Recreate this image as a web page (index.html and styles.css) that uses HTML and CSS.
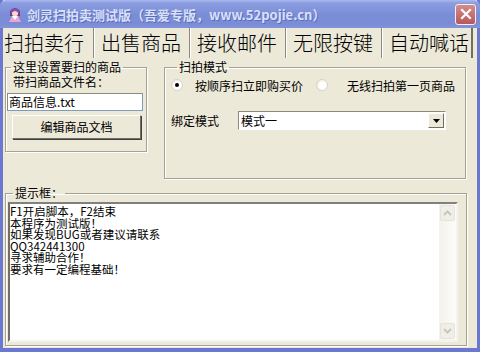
FILE: index.html
```html
<!DOCTYPE html>
<html lang="zh-CN">
<head>
    <meta charset="UTF-8">
    <title>剑灵扫拍卖测试版</title>
    <link rel="stylesheet" href="styles.css">
</head>
<body>
    <div class="window">
        <div class="titlebar">
            <svg class="app-icon" width="18" height="18" viewBox="0 0 18 18">
                <path d="M4 6 Q9 0 14 6 L14 11 L4 11 Z" fill="#6b3a8c"/>
                <circle cx="9" cy="8" r="3.2" fill="#f6d9c8"/>
                <path d="M5 9 Q9 3 13 9 L13 6 Q9 1 5 6 Z" fill="#8a4fb0"/>
                <path d="M3 17 L6 11 L12 11 L15 17 Z" fill="#e8a6d0"/>
                <path d="M6 11 L9 15 L12 11 Z" fill="#ffffff"/>
            </svg>
            <span class="title">剑灵扫拍卖测试版（吾爱专版，www.52pojie.cn）</span>
            <span class="close-btn">
                <svg width="12" height="12" viewBox="0 0 12 12">
                    <path d="M2 2 L10 10 M10 2 L2 10" stroke="#fff" stroke-width="2.2" stroke-linecap="square"/>
                </svg>
            </span>
        </div>

        <div class="client">
            <div class="tabs">
                <div class="tab tab-active">扫拍卖行</div>
                <div class="tab">出售商品</div>
                <div class="tab">接收邮件</div>
                <div class="tab">无限按键</div>
                <div class="tab">自动喊话</div>
            </div>

            <div class="page">
                <div class="top-row">
                    <fieldset class="group group-goods">
                        <legend>这里设置要扫的商品</legend>
                        <div class="field-label">带扫商品文件名：</div>
                        <div class="textbox">商品信息.txt</div>
                        <div class="button">编辑商品文档</div>
                    </fieldset>

                    <fieldset class="group group-mode">
                        <legend>扫拍模式</legend>
                        <div class="radio-row">
                            <span class="radio radio-checked"></span>
                            <span class="radio-label">按顺序扫立即购买价</span>
                            <span class="radio radio-2"></span>
                            <span class="radio-label radio-label-2">无线扫拍第一页商品</span>
                        </div>
                        <div class="select-row">
                            <span class="select-label">绑定模式</span>
                            <div class="select">
                                <span class="select-value">模式一</span>
                                <span class="select-btn">
                                    <svg width="7" height="4" viewBox="0 0 7 4"><path d="M0 0 H7 L3.5 4 Z" fill="#000"/></svg>
                                </span>
                            </div>
                        </div>
                    </fieldset>
                </div>

                <fieldset class="group group-tips">
                    <legend>提示框：</legend>
                    <div class="memo">
                        <div class="memo-text">F1开启脚本，F2结束<br>本程序为测试版！<br>如果发现BUG或者建议请联系<br>QQ342441300<br>寻求辅助合作！<br>要求有一定编程基础！</div>
                        <div class="vscroll">
                            <span class="arrow">
                                <svg width="9" height="6" viewBox="0 0 9 6"><path d="M1 5 L4.5 1.5 L8 5" fill="none" stroke="#c9c7ba" stroke-width="2"/></svg>
                            </span>
                            <span class="track"></span>
                            <span class="arrow">
                                <svg width="9" height="6" viewBox="0 0 9 6"><path d="M1 1 L4.5 4.5 L8 1" fill="none" stroke="#c9c7ba" stroke-width="2"/></svg>
                            </span>
                        </div>
                    </div>
                </fieldset>
            </div>
        </div>
    </div>
</body>
</html>
```

FILE: styles.css
```css
body {
    margin: 0;
    font-family: "Noto Sans CJK SC", "Noto Sans", sans-serif;
    font-size: 12px;
    color: #000;
    background: #ece9d8;
}
.window {
    width: 480px;
    height: 352px;
    box-sizing: border-box;
    background: #ece9d8;
    border: 3px solid #6a78d0;
    border-top: none;
    border-bottom-width: 4px;
    display: flex;
    flex-direction: column;
}
.titlebar {
    height: 28px;
    margin: 0 -3px;
    display: flex;
    align-items: center;
    background: linear-gradient(#aab8ee 0, #8c9ee0 3px, #7b8dd7 14px, #7a8cd6 24px, #8494da 28px);
    border-radius: 6px 6px 0 0;
}
.app-icon {
    margin-left: 6px;
    margin-right: 3px;
}
.title {
    flex: 1;
    color: #d8e0f7;
    font-weight: bold;
    font-size: 13px;
    text-shadow: 1px 1px 0 #5a6bbd;
}
.close-btn {
    width: 19px;
    height: 19px;
    margin-right: 4px;
    border: 1px solid #f2f2f2;
    border-radius: 3px;
    background: linear-gradient(#d48c8c, #b8585c);
    display: flex;
    align-items: center;
    justify-content: center;
}
.client {
    flex: 1;
    display: flex;
    flex-direction: column;
}
.tabs {
    display: flex;
    height: 30px;
    font-size: 20px;
    font-weight: 300;
    line-height: 30px;
    width: 470px;
}
.tab {
    width: 96px;
    box-sizing: border-box;
    padding-left: 6px;
    border-left: 1px solid #fff;
    border-right: 1px solid #8c8a7e;
    white-space: nowrap;
}
.tab-active {
    width: 91px;
    padding-left: 1px;
    border-left: none;
}
.tabs .tab:last-child {
    flex: 1;
    border-right: 2px solid #716f64;
}
.page {
    flex: 1;
    padding: 2px 0 0 2px;
}
.top-row {
    display: flex;
    align-items: flex-start;
    gap: 17px;
}
.group {
    margin: 0;
    padding: 0;
    min-width: 0;
    border: 1px solid #a5a294;
    box-shadow: 1px 1px 0 #fff, inset 1px 1px 0 #fff;
}
.group legend {
    padding: 0 2px;
    line-height: 14px;
}
.group-goods {
    width: 142px;
    height: 92px;
    box-sizing: border-box;
    padding: 0 3px 0 1px;
}
.group-goods legend {
    margin-left: 4px;
}
.field-label {
    margin: 1px 0 0 6px;
    line-height: 14px;
}
.textbox {
    margin-top: 4px;
    height: 18px;
    box-sizing: border-box;
    background: #fff;
    border: 1px solid #7f9db9;
    border-top-color: #8c8a7e;
    border-left-color: #8c8a7e;
    padding: 0 1px;
    line-height: 16px;
}
.button {
    margin: 4px 2px 0 5px;
    height: 24px;
    box-sizing: border-box;
    border: 1px solid #fff;
    border-right-color: #716f64;
    border-bottom-color: #716f64;
    box-shadow: 1px 1px 0 #404040;
    text-align: center;
    line-height: 21px;
}
.group-mode {
    width: 302px;
    height: 119px;
    box-sizing: border-box;
    padding: 0 6px;
}
.group-mode legend {
    margin-left: 6px;
}
.radio-row {
    display: flex;
    align-items: center;
    margin-top: 2px;
    height: 18px;
    white-space: nowrap;
}
.radio {
    width: 12px;
    height: 12px;
    flex: none;
    box-sizing: border-box;
    border-radius: 50%;
    border: 1px solid #d8d5c8;
    background: radial-gradient(circle at 60% 60%, #fff 40%, #e6e3d6 100%);
    display: flex;
    align-items: center;
    justify-content: center;
}
.radio-checked::after {
    content: "";
    width: 4px;
    height: 4px;
    border-radius: 50%;
    background: #000;
}
.radio-label {
    margin-left: 12px;
    width: 108px;
}
.radio-2 {
    margin-left: 13px;
}
.radio-label-2 {
    margin-left: 19px;
}
.select-row {
    display: flex;
    align-items: center;
    margin-top: 17px;
}
.select-label {
    width: 67px;
}
.select {
    width: 208px;
    height: 19px;
    box-sizing: border-box;
    background: #fff;
    border: 1px solid #8c8a7e;
    border-right-color: #fff;
    border-bottom-color: #fff;
    display: flex;
    align-items: center;
}
.select-value {
    flex: 1;
    padding-left: 2px;
}
.select-btn {
    width: 16px;
    height: 15px;
    margin-right: 1px;
    box-sizing: border-box;
    background: #ece9d8;
    border: 1px solid #fff;
    border-right-color: #716f64;
    border-bottom-color: #716f64;
    display: flex;
    align-items: center;
    justify-content: center;
}
.group-tips {
    margin-top: 7px;
    width: 462px;
    height: 160px;
    box-sizing: border-box;
    padding: 2px 8px 3px 2px;
}
.group-tips legend {
    margin-left: 5px;
}
.memo {
    height: 140px;
    box-sizing: border-box;
    background: #fff;
    border: 2px solid #716f64;
    border-right-color: #f4f3ee;
    border-bottom-color: #f4f3ee;
    border-top-color: #808080;
    display: flex;
}
.memo-text {
    flex: 1;
    padding: 2px 0 0 0;
    line-height: 11.6px;
    font-size: 11.5px;
}
.vscroll {
    width: 17px;
    display: flex;
    flex-direction: column;
    background: linear-gradient(90deg, #f3f2ec, #fcfcfa);
}
.arrow {
    height: 16px;
    box-sizing: border-box;
    margin: 1px;
    border: 1px solid #e6e4da;
    border-radius: 2px;
    background: #f0efe7;
    display: flex;
    align-items: center;
    justify-content: center;
}
.track {
    flex: 1;
}
```
